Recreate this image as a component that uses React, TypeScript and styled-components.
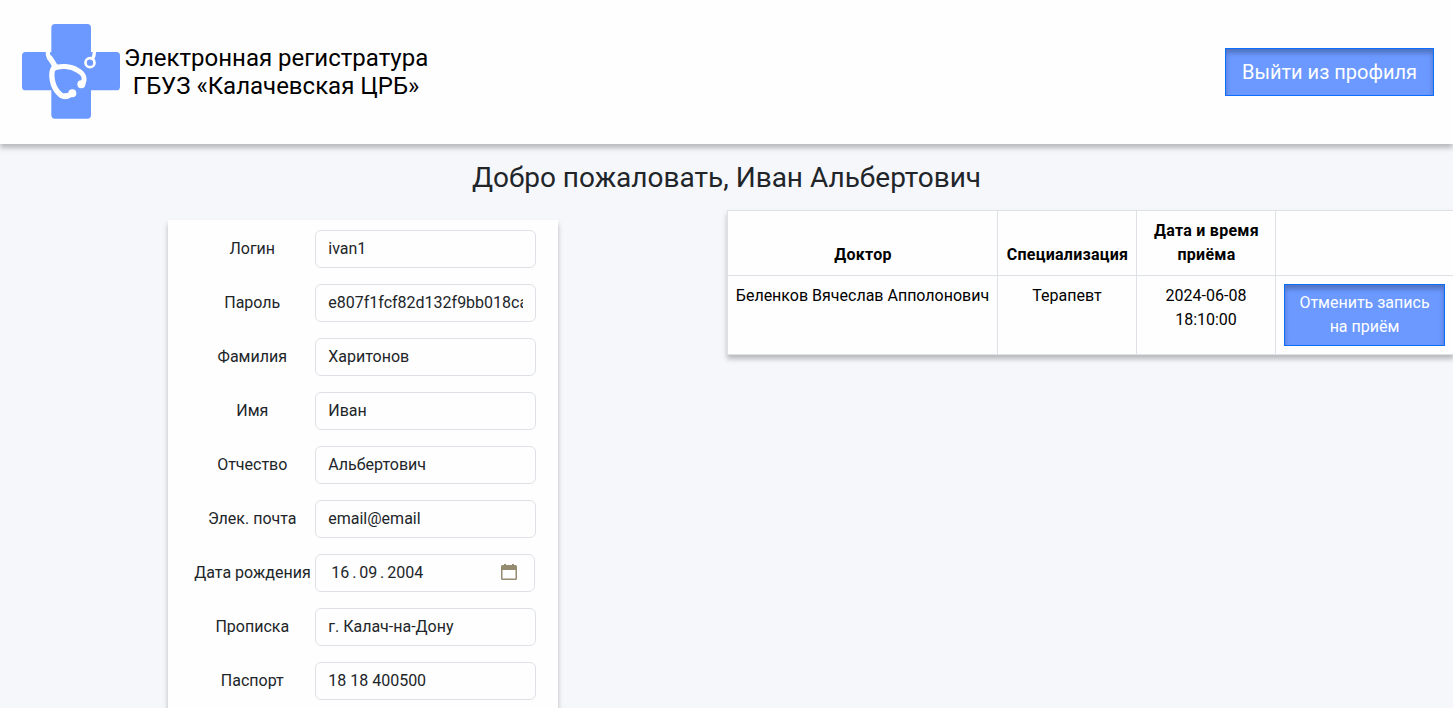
import React from 'react';
import styled, { createGlobalStyle } from 'styled-components';

const GlobalStyle = createGlobalStyle`
  *, *::before, *::after { box-sizing: border-box; }
  body {
    margin: 0;
    background: #f5f7fb;
    color: #212529;
    font-family: Roboto, sans-serif;
    font-size: 16px;
    line-height: 1.5;
  }
`;

const Page = styled.div`
  height: 100vh;
  display: flex;
  flex-direction: column;
  overflow: hidden;
`;

const Header = styled.header`
  flex: none;
  height: 144px;
  padding: 0 19px 0 15px;
  display: flex;
  align-items: center;
  justify-content: space-between;
  background: #fefefe;
  box-shadow: 0 4px 5px rgba(0, 0, 0, 0.25);
`;

const Brand = styled.div`
  display: flex;
  align-items: center;
  color: #000;
`;

const Logo = styled.svg`
  display: block;
  flex: none;
  width: 110px;
  height: 106px;
  margin: 0 -1px 2px 0;
`;

const BrandName = styled.div`
  font-size: 24px;
  line-height: 28px;
  text-align: center;
  white-space: nowrap;
`;

const Button = styled.button<{ $large?: boolean }>`
  display: block;
  width: ${(p) => (p.$large ? '209px' : '100%')};
  padding: ${(p) => (p.$large ? '8px 0' : '6px 11px 6px 12px')};
  border: 1px solid #0d6efd;
  border-radius: 0;
  background: #6b99ff;
  box-shadow: inset 0 4px 5px rgba(0, 0, 0, 0.25);
  color: #fff;
  font-family: inherit;
  font-size: ${(p) => (p.$large ? '20px' : '16px')};
  line-height: ${(p) => (p.$large ? '30px' : '24px')};
  text-align: center;
`;

const Welcome = styled.h1`
  flex: none;
  margin: 17px 0 15px;
  font-size: 28px;
  font-weight: 400;
  line-height: 34px;
  text-align: center;
`;

const Columns = styled.main`
  flex: 1;
  min-height: 0;
  display: grid;
  grid-template-columns: 50% 50%;
  align-items: start;
`;

const ProfileCard = styled.form`
  width: 390px;
  height: 560px;
  margin: 10px auto 0;
  padding: 10px 22px 0 26px;
  display: flex;
  flex-direction: column;
  gap: 16px;
  background: #fefefe;
  box-shadow: 0 4px 5px rgba(0, 0, 0, 0.25);
`;

const FieldRow = styled.label`
  display: grid;
  grid-template-columns: 116px 221px;
  column-gap: 5px;
  align-items: center;
  text-align: center;
  white-space: nowrap;
`;

const FieldName = styled.span`
  line-height: 24px;
`;

const Input = styled.input`
  width: 221px;
  height: 38px;
  padding: 6px 12px 8px;
  border: 1px solid #dee2e6;
  border-radius: 6px;
  background: #fefefe;
  color: #212529;
  font: inherit;
  line-height: 22px;
`;

const DateField = styled.span`
  width: 220px;
  height: 38px;
  padding: 0 17px 0 15px;
  display: flex;
  align-items: center;
  justify-content: space-between;
  border: 1px solid #dee2e6;
  border-radius: 6px;
`;

const DateParts = styled.span`
  display: flex;
`;

const DateDot = styled.span`
  width: 10px;
  text-align: center;
`;

const CalendarIcon = styled.svg`
  display: block;
  width: 16px;
  height: 16px;
  margin-bottom: 2px;
`;

const Appointments = styled.table`
  width: 727px;
  table-layout: fixed;
  border-collapse: collapse;
  background: #fefefe;
  box-shadow: 0 4px 5px rgba(0, 0, 0, 0.25);
  color: #000;
  text-align: center;
`;

const Column = styled.col<{ $width: number }>`
  width: ${(p) => p.$width}px;
`;

const HeadCell = styled.th`
  height: 65px;
  padding: 8px 6px 8px 8px;
  border: 1px solid #dee2e6;
  font-weight: 700;
  letter-spacing: 0.25px;
  vertical-align: bottom;
`;

const Cell = styled.td`
  height: 79px;
  padding: 8px 6px 8px 7px;
  border: 1px solid #dee2e6;
  vertical-align: top;

  &:last-child {
    padding: 8px;
  }
`;

const FullName = styled.span`
  white-space: nowrap;
`;

const fields = [
  { name: 'Логин', value: 'ivan1' },
  { name: 'Пароль', value: 'e807f1fcf82d132f9bb018ca6738a19f' },
  { name: 'Фамилия', value: 'Харитонов' },
  { name: 'Имя', value: 'Иван' },
  { name: 'Отчество', value: 'Альбертович' },
  { name: 'Элек. почта', value: 'email@email' },
  { name: 'Дата рождения', date: ['16', '09', '2004'] },
  { name: 'Прописка', value: 'г. Калач-на-Дону' },
  { name: 'Паспорт', value: '18 18 400500' },
];

function ClinicLogo() {
  return (
    <Logo viewBox="0 0 330 318" aria-hidden="true">
      <path
        fill="#6b99ff"
        d="M120 18H217Q228 18 228 30V102H304Q315 102 315 113V206Q315 217 304 217H228V291Q228 302 217 302H120Q109 302 109 291V217H32Q21 217 21 206V113Q21 102 32 102H109V30Q109 18 120 18Z"
      />
      <g fill="none" stroke="#fefefe" strokeLinecap="round" strokeLinejoin="round">
        <path strokeWidth="13" d="M102 88C95 106 99 118 108 127" />
        <path strokeWidth="16" d="M105 120L122 147" />
        <path strokeWidth="15" d="M116 151C134 142 167 143 188 157C207 168 212 178 204 196" />
        <path strokeWidth="16" d="M116 150C105 165 111 205 130 224C140 237 151 239 166 230" />
        <path strokeWidth="10" d="M233 86C241 99 239 111 233 122" />
        <circle cx="225" cy="134" r="13.5" strokeWidth="8" />
      </g>
      <g fill="#fefefe">
        <circle cx="199" cy="199" r="12" />
        <circle cx="172" cy="226" r="12" />
        <circle cx="154" cy="234" r="9" />
      </g>
    </Logo>
  );
}

function BirthDate({ parts }: { parts: string[] }) {
  return (
    <DateField>
      <DateParts>
        {parts.map((part, i) => (
          <React.Fragment key={part}>
            {i > 0 && <DateDot>.</DateDot>}
            <span>{part}</span>
          </React.Fragment>
        ))}
      </DateParts>
      <CalendarIcon viewBox="0 0 16 16" aria-hidden="true">
        <path
          fill="#958b70"
          fillRule="evenodd"
          d="M3 0H5V1H11V0H13V1H14.5Q16 1 16 2.5V14.5Q16 16 14.5 16H1.5Q0 16 0 14.5V2.5Q0 1 1.5 1H3ZM1.5 6V14.5H14.5V6Z"
        />
      </CalendarIcon>
    </DateField>
  );
}

export default function App() {
  return (
    <Page>
      <GlobalStyle />
      <Header>
        <Brand>
          <ClinicLogo />
          <BrandName>
            Электронная регистратура
            <br />
            ГБУЗ «Калачевская ЦРБ»
          </BrandName>
        </Brand>
        <Button $large type="button">Выйти из профиля</Button>
      </Header>
      <Welcome>Добро пожаловать, Иван Альбертович</Welcome>
      <Columns>
        <ProfileCard>
          {fields.map((field) => (
            <FieldRow key={field.name}>
              <FieldName>{field.name}</FieldName>
              {field.date ? <BirthDate parts={field.date} /> : <Input defaultValue={field.value} />}
            </FieldRow>
          ))}
        </ProfileCard>
        <Appointments>
          <colgroup>
            <Column $width={270} />
            <Column $width={139} />
            <Column $width={139} />
            <Column $width={178} />
          </colgroup>
          <thead>
            <tr>
              <HeadCell>Доктор</HeadCell>
              <HeadCell>Специализация</HeadCell>
              <HeadCell>Дата и время приёма</HeadCell>
              <HeadCell />
            </tr>
          </thead>
          <tbody>
            <tr>
              <Cell><FullName>Беленков Вячеслав Апполонович</FullName></Cell>
              <Cell>Терапевт</Cell>
              <Cell>2024-06-08 18:10:00</Cell>
              <Cell>
                <Button type="button">Отменить запись на приём</Button>
              </Cell>
            </tr>
          </tbody>
        </Appointments>
      </Columns>
    </Page>
  );
}
